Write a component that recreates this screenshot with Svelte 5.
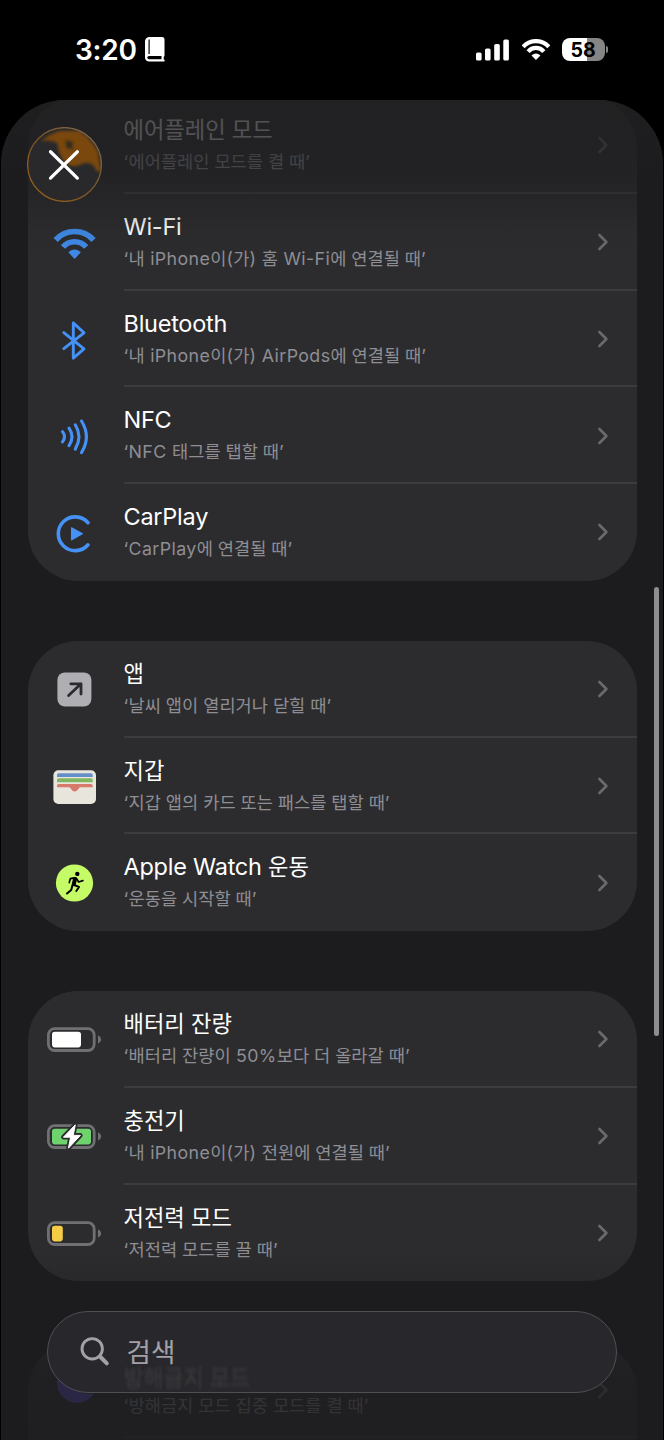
<script>
  const groups = [
    [
      { icon: 'airplane', title: '에어플레인 모드', sub: '‘에어플레인 모드를 켤 때’' },
      { icon: 'wifi', title: 'Wi-Fi', sub: '‘내 iPhone이(가) 홈 Wi-Fi에 연결될 때’' },
      { icon: 'bluetooth', title: 'Bluetooth', sub: '‘내 iPhone이(가) AirPods에 연결될 때’' },
      { icon: 'nfc', title: 'NFC', sub: '‘NFC 태그를 탭할 때’' },
      { icon: 'carplay', title: 'CarPlay', sub: '‘CarPlay에 연결될 때’' },
    ],
    [
      { icon: 'app', title: '앱', sub: '‘날씨 앱이 열리거나 닫힐 때’' },
      { icon: 'wallet', title: '지갑', sub: '‘지갑 앱의 카드 또는 패스를 탭할 때’' },
      { icon: 'workout', title: 'Apple Watch 운동', sub: '‘운동을 시작할 때’' },
    ],
    [
      { icon: 'battery', title: '배터리 잔량', sub: '‘배터리 잔량이 50%보다 더 올라갈 때’' },
      { icon: 'charger', title: '충전기', sub: '‘내 iPhone이(가) 전원에 연결될 때’' },
      { icon: 'lowpower', title: '저전력 모드', sub: '‘저전력 모드를 끌 때’' },
    ],
    [
      { icon: 'moon', title: '', sub: '‘방해금지 모드 집중 모드를 켤 때’' },
      { icon: '', title: '', sub: '' },
    ],
  ];

  // Hangul and Latin runs use different optical sizes.
  const runs = (s) =>
    (s.match(/[가-힣]+(?: +[가-힣]+)*|[^가-힣]+/g) ?? []).map((t) => ({ t, ko: /[가-힣]/.test(t) }));
</script>

{#snippet mixed(s)}{#each runs(s) as r}<span class:ko={r.ko}>{r.t}</span>{/each}{/snippet}

{#snippet cell(fill, w)}
  <rect x="20.400" y="37.700" width="45.800" height="21.800" rx="6.300" fill="none" stroke="#707074" stroke-width="2.800" />
  <path d="M70 44.600c1.900.6 3 2.100 3 3.900s-1.100 3.300-3 3.900z" fill="#707074" />
  <rect x="24" y="40.800" width={w} height="15.600" rx="2.800" {fill} />
{/snippet}

<div class="phone">
  <header class="status">
    <div class="left">
      <span class="time">3:20</span>
      <svg class="book" width="20" height="25" viewBox="0 0 20 25">
        <path d="M4.500 0H17a2.500 2.500 0 0 1 2.500 2.500V18.500a1.500 1.500 0 0 1-.8 1.400v2.600c.8.1 1 .5 1 .9s-.3 1.100-1 1.100H4.200A4 4 0 0 1 0 20.500V4.500A4.500 4.500 0 0 1 4.500 0z" fill="#fff" />
        <path d="M4.100 2.600V17" stroke="#000" stroke-width="1.200" />
        <path d="M4 18.900H16.500v3.300H4a1.650 1.650 0 0 1 0-3.300z" fill="#000" />
      </svg>
    </div>
    <div class="right">
      <svg width="34" height="22" viewBox="0 0 34 22" fill="#fff">
        <rect x="0" y="13.500" width="5.600" height="8" rx="1.600" />
        <rect x="9" y="9.500" width="5.600" height="12" rx="1.600" />
        <rect x="18.200" y="5" width="5.600" height="16.500" rx="1.600" />
        <rect x="27.300" y="0.500" width="5.600" height="21" rx="1.600" />
      </svg>
      <svg class="sw" width="28" height="21" viewBox="26 34.500 41.300 31" fill="none" stroke="#fff" stroke-width="6.200">
        <path d="M27.600 46A25.600 25.600 0 0 1 65.600 46M35 53A15.300 15.300 0 0 1 58.200 53" />
        <path d="M40 58.700Q46.600 53 53.200 58.700L46.600 65.500Z" fill="#fff" stroke="none" />
      </svg>
      <div class="batt"><span>58</span></div>
      <i class="nub"></i>
    </div>
  </header>

  <main class="sheet">
    {#each groups as g}
      <section class="card">
        {#each g as row}
          <div class="row">
            <svg class="icon" viewBox="0 0 96 96.750">
              {#if row.icon === 'wifi'}
                <g fill="none" stroke="#3f8ae8" stroke-width="5.600">
                  <path d="M27.600 46A25.600 25.600 0 0 1 65.600 46M35 53A15.300 15.300 0 0 1 58.200 53" />
                </g>
                <path d="M41.300 58.200Q46.600 54 51.900 58.200L46.600 64Z" fill="#3f8ae8" stroke="#3f8ae8" stroke-width="1.400" stroke-linejoin="round" />
              {:else if row.icon === 'bluetooth'}
                <path d="M35.800 41.600 56 57.800 45.300 67.100V31.900L56 41.800 35.800 57.700" fill="none" stroke="#4691f5" stroke-width="2.900" stroke-linecap="round" stroke-linejoin="round" />
              {:else if row.icon === 'nfc'}
                <path d="M34.500 44.600Q38.400 49.600 34.500 54.900M41 41.200Q47 49.800 41 58.600M47.300 37.800Q54.600 49.800 47.300 62.100M53.500 34Q63.300 49.800 53.500 65.600" fill="none" stroke="#4691f5" stroke-width="3.100" stroke-linecap="round" />
              {:else if row.icon === 'carplay'}
                <path d="M60 38.700A16.900 16.900 0 1 0 60 60.800" fill="none" stroke="#4691f5" stroke-width="3.600" stroke-linecap="round" />
                <path d="M43.500 43.600 54.700 49.750 43.500 56.100Z" fill="#4691f5" stroke="#4691f5" stroke-width="1" stroke-linejoin="round" />
              {:else if row.icon === 'app'}
                <rect x="29.400" y="31.400" width="34" height="34" rx="7.500" fill="#aeaeb3" />
                <path d="M40.600 54.500 53 42.800M42.800 42.800H53V53" fill="none" stroke="#2c2c2e" stroke-width="2.800" stroke-linecap="round" stroke-linejoin="round" />
              {:else if row.icon === 'wallet'}
                <rect x="25.400" y="32.200" width="42.600" height="33.800" rx="5" fill="#e8e6dc" />
                <path d="M29 39.100V37a1.800 1.800 0 0 1 1.800-1.800H62.900a1.800 1.800 0 0 1 1.800 1.800v2.100z" fill="#648fc9" />
                <path d="M29 44.200V42a1.700 1.700 0 0 1 1.700-1.700H63A1.700 1.700 0 0 1 64.700 42v2.200z" fill="#80b65f" />
                <path d="M29 49.300V47.600a1.700 1.700 0 0 1 1.700-1.700H63a1.700 1.700 0 0 1 1.700 1.700v1.700H53c-1.700 0-2 .9-3 2.100-.9 1.200-1.900 2-3.300 2s-2.400-.8-3.300-2c-1-1.200-1.300-2.100-3-2.100z" fill="#d87a6b" />
              {:else if row.icon === 'workout'}
                <circle cx="46.500" cy="49" r="18.600" fill="#c5fb67" />
                <circle cx="49.300" cy="39.900" r="2.200" fill="#000" />
                <g fill="none" stroke="#000" stroke-linecap="round" stroke-linejoin="round">
                  <path d="M47 45 45.800 50.300" stroke-width="4" />
                  <path d="M46.500 43.900 42.400 44.600 41.300 48.600M48.300 44.300 50.600 48 54.900 46.600" stroke-width="1.700" />
                  <path d="M46 50.800 51 53 48.300 57M44.600 50.800 43.200 56 39 59.500" stroke-width="2" />
                </g>
              {:else if row.icon === 'battery'}
                {@render cell('#fff', 29)}
              {:else if row.icon === 'charger'}
                {@render cell('#6fd36d', 39)}
                <path d="M47.300 36.800 35.400 49.200H42.600L40.400 60.200 52.400 47.400H45.200Z" fill="#2c2c2e" stroke="#2c2c2e" stroke-width="4.600" stroke-linejoin="round" />
                <path d="M47.300 36.800 35.400 49.200H42.600L40.400 60.200 52.400 47.400H45.200Z" fill="#fff" stroke="#fff" stroke-width="1" stroke-linejoin="round" />
              {:else if row.icon === 'lowpower'}
                {@render cell('#f6cb45', 10.800)}
              {:else if row.icon === 'moon'}
                <path d="M32 31A18.500 18.500 0 1 0 66 52.500Q44 55 36 31Z" fill="#5e50d8" />
              {/if}
            </svg>
            <div class="body">
              <div class="text">
                <div class="title">{@render mixed(row.title)}</div>
                <div class="sub">{@render mixed(row.sub)}</div>
              </div>
              <svg class="chev" width="12" height="18" viewBox="0 0 12 18"><path d="M2.400 2 9.400 9 2.400 16" /></svg>
            </div>
          </div>
        {/each}
      </section>
    {/each}

    <div class="fade top"></div>
    <div class="fade bottom"></div>
    <i class="scroll"></i>

    <button class="close" aria-label="닫기">
      <svg width="75" height="75" viewBox="0 0 74 74">
        <defs>
          <filter id="soft" x="-20%" y="-20%" width="140%" height="140%"><feGaussianBlur stdDeviation="1.800" /></filter>
          <clipPath id="disc"><circle cx="37" cy="37" r="36.500" /></clipPath>
          <linearGradient id="rim" x1="0" y1="1" x2="1" y2="0">
            <stop offset="0" stop-color="#9a6216" /><stop offset=".5" stop-color="#7a5526" /><stop offset="1" stop-color="#7b6b58" />
          </linearGradient>
        </defs>
        <circle cx="37" cy="37" r="36.500" fill="#29292c" />
        <g clip-path="url(#disc)">
          <path d="M14 14Q22 7 32 4L52 4Q62 10 70 24L73 44Q68 45 66 38 60 33 53 37 44 41 38 35 31 28 30 16 24 12 14 14Z" fill="#7a470a" filter="url(#soft)" />
          <path d="M38 13 46 15 44 19 47 22 39 21Z" fill="#33291c" filter="url(#soft)" />
        </g>
        <circle cx="37" cy="37" r="36.400" fill="none" stroke="url(#rim)" stroke-width="1.300" />
        <path d="M23.200 24.400 49.700 50.400M49.700 24.400 23.200 50.400" stroke="#fff" stroke-width="3.200" stroke-linecap="round" />
      </svg>
    </button>

    <div class="search">
      <svg width="30" height="30" viewBox="0 0 30 30" fill="none" stroke="#a3a1a8" stroke-linecap="round">
        <circle cx="12.200" cy="11.800" r="10.200" stroke-width="2.900" />
        <path d="M20 19.500 26.800 26.300" stroke-width="4" />
      </svg>
      <span class="ph">검색</span>
      <span class="ghost" aria-hidden="true">방해금지 모드</span>
    </div>
  </main>
</div>

<style>
  :global(body) { background: #000; }
  .phone { width: 664px; height: 1440px; overflow: hidden; display: flex; flex-direction: column; background: #000; color: #fff; font-family: Inter, "Noto Sans CJK KR", sans-serif; }
  .status { height: 100px; flex: none; box-sizing: border-box; display: flex; justify-content: space-between; padding: 0 56px 0 75px; }
  .left, .right { display: flex; align-items: center; height: 99px; }
  .time { font-size: 28px; font-weight: 600; line-height: 34px; width: 70px; letter-spacing: -0.2px; }
  .sw { margin: 0 12px 0 12px; }
  .batt { width: 43px; height: 23px; border-radius: 8px; background: linear-gradient(90deg, #fff 58%, #858585 58%); color: #000; text-align: center; font-size: 19.500px; line-height: 24px; font-weight: 700; }
  .nub { width: 2.500px; height: 7px; margin-left: 1px; border-radius: 0 3px 3px 0; background: #858585; }

  .sheet { position: relative; flex: 1; min-height: 0; overflow: hidden; border-radius: 64px 64px 0 0; background: #1c1c1e; padding: 0 26px 0 26.500px; margin: 0 1px; }
  .card { background: #2c2c2e; border-radius: 50px; margin-bottom: 60px; overflow: hidden; }
  .card:first-child { margin-top: -2.800px; }
  .row { display: flex; height: 96.750px; }
  .icon { width: 96px; height: 96.750px; flex: none; }
  .body { flex: 1; display: flex; align-items: center; justify-content: space-between; box-sizing: border-box; padding-right: 28px; border-bottom: 2px solid #3c3c3f; }
  .row:last-child .body { border-bottom-color: transparent; }
  .chev { position: relative; top: .75px; fill: none; stroke: #6a6a6e; stroke-width: 2.600; stroke-linecap: round; stroke-linejoin: round; }
  .text { height: 96.750px; box-sizing: border-box; padding-top: 17.800px; white-space: nowrap; }
  .title { height: 32px; line-height: 32px; font-size: 23.500px; letter-spacing: -0.250px; color: #fff; }
  .sub { height: 32px; line-height: 32px; font-size: 17.800px; letter-spacing: .4px; color: #8e8e94; }
  .title .ko { font-size: 22.200px; letter-spacing: 0; }
  .sub .ko { font-size: 17.600px; letter-spacing: 0; }

  .fade { position: absolute; left: 0; right: 0; pointer-events: none; }
  .top { top: 0; height: 160px; background: linear-gradient(#1f1f20c8 0, #1e1e20c4 25%, #1d1d1fa0 45%, #1c1c1e60 62%, #1c1c1e10 82%, #1c1c1e00); }
  .bottom { bottom: 0; height: 190px; background: linear-gradient(#1c1c1e00, #1c1c1e90 45%, #1c1c1ec8 70%, #1c1c1ed0); }
  .scroll { position: absolute; left: 652.500px; top: 487px; width: 5px; height: 449px; border-radius: 3px; background: #8e8e91; }
  .close { position: absolute; left: 26px; top: 26.500px; width: 75px; height: 75px; padding: 0; border: 0; background: none; }
  .close svg { display: block; }
  .search { position: absolute; left: 46px; top: 1211px; width: 570px; height: 81.500px; box-sizing: border-box; border: 1.500px solid #505054; border-radius: 41px; background: #28282c; display: flex; align-items: center; padding-left: 32px; overflow: hidden; }
  .ph { margin: 0 0 0 16.500px; font-size: 26.500px; line-height: 30px; color: #a3a1a8; }
  .ghost { position: absolute; left: 75.500px; top: 52px; font-size: 21.800px; line-height: 24px; color: #3c3c3f; text-shadow: 0 3px #3c3c3f; filter: blur(1.300px); opacity: .75; white-space: nowrap; }
</style>
